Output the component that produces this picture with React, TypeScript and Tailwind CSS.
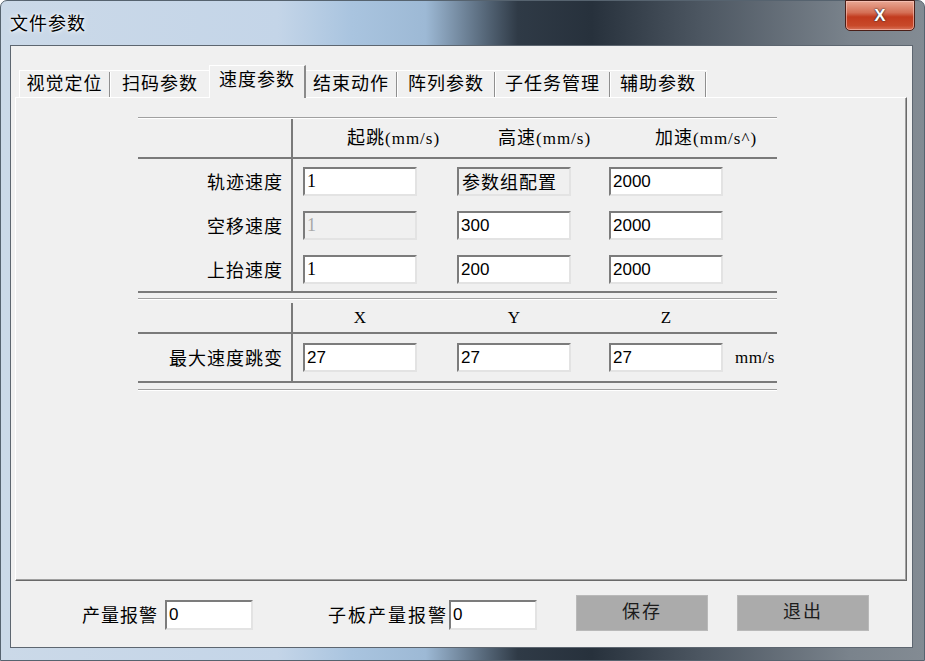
import React from 'react';

// SimSun-ish text: CJK glyphs from Noto, ascii from a serif face
const cjk = "font-['Noto_Sans_CJK_SC','Noto_Sans_CJK_TC',sans-serif]";
const serif = "font-['Liberation_Serif',serif]";

const tabs = [
    { label: '视觉定位', w: 'w-[92px]' },
    { label: '扫码参数', w: 'w-[98px]' },
    { label: '速度参数', w: 'w-[97px]', active: true },
    { label: '结束动作', w: 'w-[92px]' },
    { label: '阵列参数', w: 'w-[98px]' },
    { label: '子任务管理', w: 'w-[115px]' },
    { label: '辅助参数', w: 'w-[96px]' },
];

const speedRows = [
    { label: '轨迹速度', values: ['1', '参数组配置', '2000'] },
    { label: '空移速度', values: ['1', '300', '2000'] },
    { label: '上抬速度', values: ['1', '200', '2000'] },
];

type FieldProps = {
    value: string;
    disabled?: boolean;
    serif?: boolean;
    label?: boolean;
    w?: string;
    h?: string;
};

const Field: React.FC<FieldProps> = ({ value, disabled, serif: isSerif, label, w = 'w-[114px]', h = 'h-[29px]' }) => (
    <div
        className={`${w} ${h} shrink-0 border-2 border-t-[#7c7c7c] border-l-[#7c7c7c] border-r-[#e3e3e3] border-b-[#e3e3e3] flex items-center pl-[2px] leading-none ${
            disabled || label ? 'bg-[#f0f0f0]' : 'bg-white'
        } ${disabled ? 'text-[#a8a8a8]' : 'text-black'}`}
    >
        {label ? (
            <span className={`${cjk} text-[18px] tracking-[1px] pl-[1px]`}>{value}</span>
        ) : isSerif ? (
            <span className={`${serif} text-[18px]`}>{value}</span>
        ) : (
            <span className="font-['Liberation_Sans',sans-serif] text-[17px]">{value}</span>
        )}
    </div>
);

const Groove = () => (
    <div>
        <div className="h-px bg-[#a0a0a0]" />
        <div className="h-px bg-white" />
    </div>
);

const Thick = () => <div className="h-[2px] bg-[#7a7a7a]" />;

const HeadLabel: React.FC<{ cn: string; unit: string; pl: string }> = ({ cn, unit, pl }) => (
    <div className={`w-[114px] shrink-0 ${pl} whitespace-nowrap flex items-baseline`}>
        <span className={`${cjk} text-[18px] tracking-[1px]`}>{cn}</span>
        <span className={`${serif} text-[17px] tracking-[1px]`}>{unit}</span>
    </div>
);

const App: React.FC = () => {
    return (
        <div className="w-[925px] h-[661px] overflow-hidden bg-white">
            <div className="w-[925px] h-[661px] flex flex-col rounded-t-[7px] border border-[#56636f] bg-[linear-gradient(90deg,#cbd9e8_0%,#c4d5e8_30%,#a9c4df_38%,#9db9d5_46%,#2f3a46_56%,#27313c_64%,#4d5762_76%,#7a838c_92%,#838b93_100%)]">
                {/* Title bar */}
                <div className="h-[44px] shrink-0 relative flex items-center pl-[9px] pb-[1px]">
                    <span className={`${cjk} text-[18px] tracking-[1px] text-black [text-shadow:0_0_6px_#ffffff,0_0_3px_#ffffff]`}>
                        文件参数
                    </span>
                    <div className="absolute right-[9px] -top-px w-[70px] h-[31px] rounded-b-[5px] border border-[#4a1e17] bg-[linear-gradient(180deg,#e9a895_0%,#d46f55_40%,#c23b1e_55%,#c8492a_85%,#d9735a_100%)] shadow-[inset_0_0_0_1px_rgba(255,210,200,0.55)] flex items-center justify-center">
                        <span className="font-['Liberation_Sans',sans-serif] font-bold text-[17px] text-white [text-shadow:0_0_2px_#2a2a2a,0_0_1px_#2a2a2a]">
                            X
                        </span>
                    </div>
                </div>

                {/* Client area */}
                <div className="flex-1 ml-[9px] mr-[11px] mb-[12px] border border-[#5d6670] bg-[#f0f0f0] flex flex-col">
                    {/* Tab strip */}
                    <div className="h-[51px] shrink-0 flex items-end pl-[8px]">
                        {tabs.map((t, i) =>
                            t.active ? (
                                <div
                                    key={t.label}
                                    className={`${t.w} h-[33px] -mb-px relative z-10 bg-[#f0f0f0] border-t border-l border-white border-r-2 border-r-[#8a8a8a] flex items-center justify-center pb-[7px]`}
                                >
                                    <span className={`${cjk} text-[18px] tracking-[1px] text-black`}>{t.label}</span>
                                </div>
                            ) : (
                                <div
                                    key={t.label}
                                    className={`${t.w} h-[27px] border-t border-white ${i === 0 ? 'border-l' : ''} flex items-start`}
                                >
                                    <div className="flex-1 flex justify-center -mt-[2px]">
                                        <span className={`${cjk} text-[18px] tracking-[1px] text-black`}>{t.label}</span>
                                    </div>
                                    {tabs[i + 1]?.active ? null : (
                                        <div className="flex h-[25px] mt-[1px]">
                                            <div className="w-px bg-[#8f8f8f]" />
                                            <div className="w-px bg-[#ffffff]" />
                                        </div>
                                    )}
                                </div>
                            )
                        )}
                    </div>

                    {/* Tab page */}
                    <div className="flex-1 ml-[4px] mr-[5px] border-t border-l border-white border-r border-b border-r-[#696969] border-b-[#696969] shadow-[inset_-1px_-1px_0_#a0a0a0] pt-[19px] pl-[122px]">
                        <div className="w-[639px] text-black">
                            {/* Speed table */}
                            <Groove />
                            <div className="h-[38px] flex">
                                <div className="w-[155px] shrink-0 border-r-2 border-[#7a7a7a]" />
                                <div className="flex items-center pl-[10px] pb-[2px]">
                                    <HeadLabel cn="起跳" unit="(mm/s)" pl="pl-[44px]" />
                                    <div className="w-[40px] shrink-0" />
                                    <HeadLabel cn="高速" unit="(mm/s)" pl="pl-[41px]" />
                                    <div className="w-[38px] shrink-0" />
                                    <HeadLabel cn="加速" unit="(mm/s^)" pl="pl-[46px]" />
                                </div>
                            </div>
                            <Thick />
                            {speedRows.map((r, ri) => (
                                <div key={r.label} className="h-[44px] flex">
                                    <div className="w-[155px] shrink-0 border-r-2 border-[#7a7a7a] flex items-center justify-end pr-[8px]">
                                        <span className={`${cjk} text-[18px] tracking-[1px]`}>{r.label}</span>
                                    </div>
                                    <div className="flex items-center pl-[10px] gap-[40px]">
                                        <Field value={r.values[0]} serif disabled={ri === 1} />
                                        <Field value={r.values[1]} label={ri === 0} />
                                        <div className="-ml-[2px]">
                                            <Field value={r.values[2]} />
                                        </div>
                                    </div>
                                </div>
                            ))}
                            <Thick />
                            <div className="h-[5px]" />
                            <Groove />

                            {/* Max speed jump table */}
                            <div className="h-[3px]" />
                            <div className="h-[29px] flex">
                                <div className="w-[155px] shrink-0 border-r-2 border-[#7a7a7a]" />
                                <div className={`flex items-center pl-[10px] ${serif} text-[17px]`}>
                                    <div className="w-[114px] text-center">X</div>
                                    <div className="w-[40px]" />
                                    <div className="w-[114px] text-center">Y</div>
                                    <div className="w-[38px]" />
                                    <div className="w-[114px] text-center">Z</div>
                                </div>
                            </div>
                            <Thick />
                            <div className="h-[47px] flex">
                                <div className="w-[155px] shrink-0 border-r-2 border-[#7a7a7a] flex items-center justify-end pr-[8px]">
                                    <span className={`${cjk} text-[18px] tracking-[1px]`}>最大速度跳变</span>
                                </div>
                                <div className="flex items-center pl-[10px]">
                                    <Field value="27" />
                                    <div className="w-[40px]" />
                                    <Field value="27" />
                                    <div className="w-[38px]" />
                                    <Field value="27" />
                                    <span className={`${serif} text-[17px] ml-[12px] tracking-[0.5px]`}>mm/s</span>
                                </div>
                            </div>
                            <Thick />
                            <div className="h-[6px]" />
                            <Groove />
                        </div>
                    </div>

                    {/* Bottom bar */}
                    <div className="h-[66px] shrink-0 flex items-center pl-[71px] pt-[1px]">
                        <span className={`${cjk} text-[18px] tracking-[1px] text-black mr-[7px]`}>产量报警</span>
                        <Field value="0" w="w-[88px]" h="h-[30px]" />
                        <span className={`${cjk} text-[18px] tracking-[2px] text-black ml-[75px] mr-[1px]`}>子板产量报警</span>
                        <Field value="0" w="w-[88px]" h="h-[30px]" />
                        <button className="ml-[39px] w-[132px] h-[36px] -mt-[4px] bg-[#ababab] border border-[#b9b9b9] flex items-center justify-center pb-[4px]">
                            <span className={`${cjk} text-[18px] tracking-[2px] text-[#1c1c1c]`}>保存</span>
                        </button>
                        <button className="ml-[29px] w-[132px] h-[36px] -mt-[4px] bg-[#ababab] border border-[#b9b9b9] flex items-center justify-center pb-[4px]">
                            <span className={`${cjk} text-[18px] tracking-[2px] text-[#1c1c1c]`}>退出</span>
                        </button>
                    </div>
                </div>
            </div>
        </div>
    );
};

export default App;
